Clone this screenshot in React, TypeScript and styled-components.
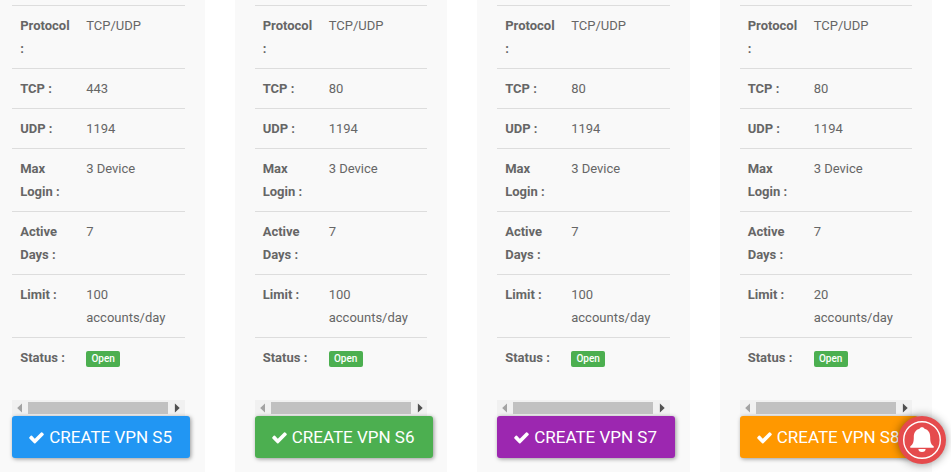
import React from "react";
import styled, { createGlobalStyle } from "styled-components";

const GlobalStyle = createGlobalStyle`
  * {
    box-sizing: border-box;
  }

  body {
    margin: 0;
    background: #ffffff;
    overflow: hidden;
  }
`;

const Root = styled.div`
  width: 951px;
  height: 472px;
  overflow: hidden;
  font-family: Roboto, sans-serif;
  font-size: 13px;
  line-height: 23px;
  color: #666666;
`;

const ServerList = styled.div`
  width: 970px;
  height: 472px;
  margin-left: -22.8px;
  display: flex;
`;

const Column = styled.div`
  width: 242.5px;
  padding: 0 15px;
  display: flex;
`;

const Card = styled.div`
  width: 212.5px;
  padding: 5px 20px 0;
  background: #f9f9f9;
`;

const Details = styled.div`
  margin-bottom: 23px;
`;

const DetailRow = styled.div`
  display: flex;
  border-top: 1px solid #dddddd;
`;

const Label = styled.div`
  width: 66px;
  padding: 8px;
  font-weight: 700;
`;

const Value = styled.div`
  flex: 1;
  padding: 8px;
`;

const Badge = styled.span`
  display: block;
  width: 34px;
  height: 16px;
  margin-top: 5px;
  margin-bottom: 2px;
  border-radius: 2px;
  background: #4caf50;
  color: #ffffff;
  font-size: 10px;
  font-weight: 500;
  line-height: 16px;
  text-align: center;
`;

const Scrollbar = styled.div`
  height: 16px;
  padding: 2px 0;
  display: flex;
  align-items: center;
  background: #f1f1f1;
`;

const ScrollArrow = styled.svg`
  width: 16px;
  height: 16px;
  flex: none;
`;

const ScrollThumb = styled.div`
  width: 140px;
  height: 12px;
  background: #c1c1c1;
`;

const CreateButton = styled.a<{ $color: string }>`
  width: 178px;
  height: 42px;
  padding: 0 16px;
  display: flex;
  align-items: center;
  border-radius: 3px;
  background: ${(props) => props.$color};
  box-shadow: 1px 1px 4px rgba(0, 0, 0, 0.4);
  color: #ffffff;
  font-size: 17px;
  white-space: nowrap;
`;

const CheckIcon = styled.svg`
  width: 17px;
  height: 17px;
  margin-right: 4px;
  flex: none;
  fill: #ffffff;
`;

const Bell = styled.div`
  position: fixed;
  left: 898px;
  top: 416px;
  width: 48px;
  height: 48px;
  border-radius: 50%;
  background: #e54b4d;
  box-shadow: 0 0 10px rgba(0, 0, 0, 0.45);

  svg {
    display: block;
  }
`;

const servers = [
  { name: "S5", tcp: "443", limit: "100", color: "#2196f3" },
  { name: "S6", tcp: "80", limit: "100", color: "#4caf50" },
  { name: "S7", tcp: "80", limit: "100", color: "#9c27b0" },
  { name: "S8", tcp: "80", limit: "20", color: "#ff9800" },
];

type Server = (typeof servers)[number];

function ServerCard({ name, tcp, limit, color }: Server) {
  const rows = [
    ["Protocol :", "TCP/UDP"],
    ["TCP :", tcp],
    ["UDP :", "1194"],
    ["Max Login :", "3 Device"],
    ["Active Days :", "7"],
    ["Limit :", `${limit} accounts/day`],
  ];

  return (
    <Column>
      <Card>
        <Details>
          {rows.map(([label, value]) => (
            <DetailRow key={label}>
              <Label>{label}</Label>
              <Value>{value}</Value>
            </DetailRow>
          ))}
          <DetailRow>
            <Label>Status :</Label>
            <Value>
              <Badge>Open</Badge>
            </Value>
          </DetailRow>
        </Details>

        <Scrollbar>
          <ScrollArrow viewBox="0 0 16 16">
            <path d="M10 3.400v9.200L5.200 8z" fill="#a3a3a3" />
          </ScrollArrow>
          <ScrollThumb />
          <ScrollArrow viewBox="0 0 16 16">
            <path d="M6.900 3.400v9.200L11.700 8z" fill="#505050" />
          </ScrollArrow>
        </Scrollbar>

        <CreateButton $color={color}>
          <CheckIcon viewBox="0 0 1792 1792">
            <path d="M1671 566q0 40-28 68l-724 724-136 136q-28 28-68 28t-68-28l-136-136-362-362q-28-28-28-68t28-68l136-136q28-28 68-28t68 28l294 295 656-657q28-28 68-28t68 28l136 136q28 28 28 68z" />
          </CheckIcon>
          CREATE VPN {name}
        </CreateButton>
      </Card>
    </Column>
  );
}

function App() {
  return (
    <Root>
      <GlobalStyle />
      <ServerList>
        {servers.map((server) => (
          <ServerCard key={server.name} {...server} />
        ))}
      </ServerList>

      <Bell>
        <svg width="48" height="48" viewBox="0 0 48 48">
          <circle cx="24" cy="24" r="18.3" fill="none" stroke="#ffffff" strokeWidth="1.4" />
          <path
            d="M24 11.300c-1.400 0-2.200.6-2.500 1.500-3.800 1-5.700 4-5.700 8.200 0 5-.6 7.200-3.500 9.300v1.400h23.400v-1.400c-2.900-2.100-3.500-4.300-3.500-9.300 0-4.200-1.900-7.200-5.700-8.200-.3-.9-1.100-1.500-2.500-1.500zM20.400 33a3.600 3 0 0 0 7.200 0z"
            fill="#ffffff"
          />
        </svg>
      </Bell>
    </Root>
  );
}

export default App;
